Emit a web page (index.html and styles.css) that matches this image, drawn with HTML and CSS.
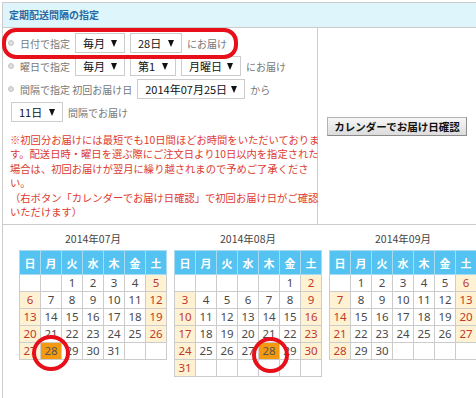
FILE: index.html
```html
<!DOCTYPE html>
<html lang="ja">
<head>
<meta charset="utf-8">
<title>定期配送間隔の指定</title>
<link rel="stylesheet" href="styles.css">
</head>
<body>

<div class="panel">
	<div class="panel_title">定期配送間隔の指定</div>

	<div class="panel_body">
		<div class="options">
			<div class="opt_row">
				<span class="radio"></span>
				<span class="label">日付で指定</span>
				<span class="sel w50">毎月<i class="arrow"></i></span>
				<span class="sel w52">28日<i class="arrow"></i></span>
				<span class="label">にお届け</span>
			</div>
			<div class="opt_row">
				<span class="radio"></span>
				<span class="label">曜日で指定</span>
				<span class="sel w50">毎月<i class="arrow"></i></span>
				<span class="sel w46">第1<i class="arrow"></i></span>
				<span class="sel w60">月曜日<i class="arrow"></i></span>
				<span class="label">にお届け</span>
			</div>
			<div class="opt_row">
				<span class="radio"></span>
				<span class="label">間隔で指定 初回お届け日</span>
				<span class="sel w108">2014年07月25日<i class="arrow"></i></span>
				<span class="label">から</span>
			</div>
			<div class="opt_row indent">
				<span class="sel w52">11日<i class="arrow"></i></span>
				<span class="label">間隔でお届け</span>
			</div>

			<p class="note">※初回分お届けには最短でも10日間ほどお時間をいただいておりま<br>す。配送日時・曜日を選ぶ際にご注文日より10日以内を指定された<br>場合は、初回お届けが翌月に繰り越されまので予めご了承くださ<br>い。<br>（右ボタン「カレンダーでお届け日確認」で初回お届け日がご確認<br>いただけます）</p>
		</div>

		<div class="side">
			<button class="cal_button">カレンダーでお届け日確認</button>
		</div>
	</div>

	<div class="calendars">
		<div class="month">
			<div class="month_title">2014年07月</div>
			<table class="cal">
				<tr><th>日</th><th>月</th><th>火</th><th>水</th><th>木</th><th>金</th><th>土</th></tr>
				<tr><td></td><td></td><td>1</td><td>2</td><td>3</td><td>4</td><td class="we">5</td></tr>
				<tr><td class="we">6</td><td>7</td><td>8</td><td>9</td><td>10</td><td>11</td><td class="we">12</td></tr>
				<tr><td class="we">13</td><td>14</td><td>15</td><td>16</td><td>17</td><td>18</td><td class="we">19</td></tr>
				<tr><td class="we">20</td><td>21</td><td>22</td><td>23</td><td>24</td><td>25</td><td class="we">26</td></tr>
				<tr><td class="we">27</td><td class="picked">28</td><td>29</td><td>30</td><td>31</td><td></td><td></td></tr>
			</table>
		</div>
		<div class="month">
			<div class="month_title">2014年08月</div>
			<table class="cal">
				<tr><th>日</th><th>月</th><th>火</th><th>水</th><th>木</th><th>金</th><th>土</th></tr>
				<tr><td></td><td></td><td></td><td></td><td></td><td>1</td><td class="we">2</td></tr>
				<tr><td class="we">3</td><td>4</td><td>5</td><td>6</td><td>7</td><td>8</td><td class="we">9</td></tr>
				<tr><td class="we">10</td><td>11</td><td>12</td><td>13</td><td>14</td><td>15</td><td class="we">16</td></tr>
				<tr><td class="we">17</td><td>18</td><td>19</td><td>20</td><td>21</td><td>22</td><td class="we">23</td></tr>
				<tr><td class="we">24</td><td>25</td><td>26</td><td>27</td><td class="picked">28</td><td>29</td><td class="we">30</td></tr>
				<tr><td class="we">31</td><td></td><td></td><td></td><td></td><td></td><td></td></tr>
			</table>
		</div>
		<div class="month">
			<div class="month_title">2014年09月</div>
			<table class="cal">
				<tr><th>日</th><th>月</th><th>火</th><th>水</th><th>木</th><th>金</th><th>土</th></tr>
				<tr><td></td><td>1</td><td>2</td><td>3</td><td>4</td><td>5</td><td class="we">6</td></tr>
				<tr><td class="we">7</td><td>8</td><td>9</td><td>10</td><td>11</td><td>12</td><td class="we">13</td></tr>
				<tr><td class="we">14</td><td>15</td><td>16</td><td>17</td><td>18</td><td>19</td><td class="we">20</td></tr>
				<tr><td class="we">21</td><td>22</td><td>23</td><td>24</td><td>25</td><td>26</td><td class="we">27</td></tr>
				<tr><td class="we">28</td><td>29</td><td>30</td><td></td><td></td><td></td><td></td></tr>
			</table>
		</div>
	</div>
</div>

<!-- red marker rings drawn over the screenshot -->
<div class="mark mark_row"></div>
<div class="mark mark_day1"></div>
<div class="mark mark_day2"></div>

</body>
</html>
```

FILE: styles.css
```css
html, body {
margin: 0;
padding: 0;
overflow: hidden;
background: #ffffff;
}

body {
font-family: "Noto Sans CJK JP", "Liberation Sans", sans-serif;
font-size: 10px;
color: #333333;
}


/* panel */


.panel {
margin: 2px 0 0 2px;
width: 480px;
border: 1px solid #cccccc;
}

.panel_title {
height: 24px;
line-height: 24px;
padding-left: 6px;
background-color: #dff5fc;
border-bottom: 1px solid #cccccc;
color: #2a6aa0;
font-weight: bold;
font-size: 10px;
}

.panel_body {
display: flex;
border-bottom: 1px solid #cccccc;
}

.options {
width: 310px;
padding: 5px 0 5px 4px;
border-right: 1px solid #cccccc;
}

.side {
flex: 1;
display: flex;
align-items: center;
padding-left: 9px;
}


/* option rows */


.opt_row {
display: flex;
align-items: center;
gap: 5px;
height: 20px;
margin-bottom: 3px;
}

.opt_row.indent {
padding-left: 4px;
}

.radio {
width: 4px;
height: 4px;
margin: 0 1px 0 1px;
border-radius: 50%;
border: 1px solid #c4c4c4;
background-color: #dddddd;
}

.label {
color: #777777;
white-space: nowrap;
}

.sel {
box-sizing: border-box;
height: 20px;
display: flex;
align-items: center;
justify-content: space-between;
padding: 0 7px 0 7px;
border: 1px solid #cccccc;
background-color: #ffffff;
color: #111111;
font-size: 11px;
white-space: nowrap;
}

.w46 { width: 46px; }
.w50 { width: 50px; }
.w52 { width: 52px; }
.w60 { width: 60px; }
.w108 { width: 108px; }

.arrow {
width: 0;
height: 0;
border-left: 3.5px solid transparent;
border-right: 3.5px solid transparent;
border-top: 7px solid #111111;
}

.note {
margin: 11px 0 0 3px;
font-size: 10.3px;
line-height: 14.4px;
color: #dd3a30;
white-space: nowrap;
}

.cal_button {
width: 140px;
height: 19px;
padding: 0;
border: 1px solid #b4b4b4;
border-right-color: #8c8c8c;
border-bottom-color: #8c8c8c;
background: linear-gradient(#f6f6f6, #dcdcdc);
font-family: inherit;
font-size: 10.5px;
font-weight: bold;
color: #111111;
}


/* calendars */


.calendars {
display: flex;
padding: 7px 0 30px 16px;
}

.month {
width: 148px;
margin-right: 7px;
}

.month_title {
text-align: center;
font-size: 10.5px;
line-height: 14px;
color: #444444;
margin-bottom: 4px;
}

.cal {
border-collapse: collapse;
width: 148px;
}

.cal th, .cal td {
border: 1px solid #cccccc;
width: 20px;
padding: 0;
text-align: center;
}

.cal th {
height: 23px;
background-color: #55c3f1;
border-color: #a9dcf3;
color: #ffffff;
font-size: 11px;
}

.cal td {
height: 16px;
font-family: "Noto Sans", sans-serif;
font-size: 11.5px;
line-height: 16px;
color: #4a4a4a;
}

.cal td.we {
background-color: #fff2d2;
color: #c0392b;
}

.cal td.picked {
background-color: #f59a10;
color: #555555;
}


/* red marker rings */


.mark {
position: absolute;
box-sizing: border-box;
border: 4px solid #e60f1a;
}

.mark_row {
left: 2px;
top: 28px;
width: 236px;
height: 31px;
border-radius: 14px;
}

.mark_day1 {
left: 32px;
top: 335px;
width: 38px;
height: 36px;
border-radius: 50%;
}

.mark_day2 {
left: 252px;
top: 337px;
width: 37px;
height: 36px;
border-radius: 50%;
}
```
